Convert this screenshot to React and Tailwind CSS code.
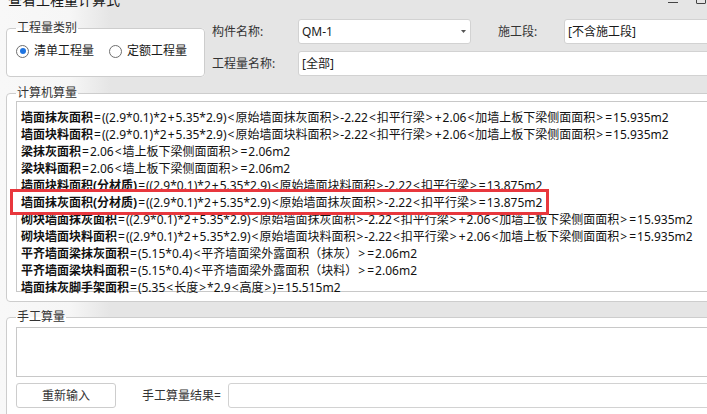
const lines = [
  ["墙面抹灰面积", "=((2.9*0.1)*2+5.35*2.9)<原始墙面抹灰面积>-2.22<扣平行梁>+2.06<加墙上板下梁侧面面积>=15.935m2"],
  ["墙面块料面积", "=((2.9*0.1)*2+5.35*2.9)<原始墙面块料面积>-2.22<扣平行梁>+2.06<加墙上板下梁侧面面积>=15.935m2"],
  ["梁抹灰面积", "=2.06<墙上板下梁侧面面积>=2.06m2"],
  ["梁块料面积", "=2.06<墙上板下梁侧面面积>=2.06m2"],
  ["墙面块料面积(分材质)", "=((2.9*0.1)*2+5.35*2.9)<原始墙面块料面积>-2.22<扣平行梁>=13.875m2"],
  ["墙面抹灰面积(分材质)", "=((2.9*0.1)*2+5.35*2.9)<原始墙面抹灰面积>-2.22<扣平行梁>=13.875m2"],
  ["砌块墙面抹灰面积", "=((2.9*0.1)*2+5.35*2.9)<原始墙面抹灰面积>-2.22<扣平行梁>+2.06<加墙上板下梁侧面面积>=15.935m2"],
  ["砌块墙面块料面积", "=((2.9*0.1)*2+5.35*2.9)<原始墙面块料面积>-2.22<扣平行梁>+2.06<加墙上板下梁侧面面积>=15.935m2"],
  ["平齐墙面梁抹灰面积", "=(5.15*0.4)<平齐墙面梁外露面积（抹灰）>=2.06m2"],
  ["平齐墙面梁块料面积", "=(5.15*0.4)<平齐墙面梁外露面积（块料）>=2.06m2"],
  ["墙面抹灰脚手架面积", "=(5.35<长度>*2.9<高度>)=15.515m2"],
];

function fmt(s) {
  return s.split(/([=<>+])/).map((p, i) =>
    /^[=<>+]$/.test(p) ? (
      <span key={i} className="px-px">
        {p}
      </span>
    ) : (
      <span key={i}>{p}</span>
    )
  );
}

function Radio({ checked, label }) {
  return (
    <div className="flex items-center">
      <div className="w-[13px] h-[13px] rounded-full border border-[#6e6e6e] bg-white flex items-center justify-center">
        {checked && <div className="w-[6px] h-[6px] rounded-full bg-[#1f74e0]" />}
      </div>
      <span className="ml-[5px] leading-[16px] text-[#1a1a1a]">{label}</span>
    </div>
  );
}

export default function App() {
  return (
    <div className="w-[707px] h-[414px] overflow-hidden bg-[linear-gradient(90deg,#f8f8f8_0px,#f6f6f6_70px,#e5e5e5_110px,#e5e5e5_100%)] font-['Noto_Sans','Noto_Sans_CJK_SC',sans-serif] text-[12px] text-[#1b1b1b]">
      <div className="w-[800px] flex flex-col">
        {/* title bar */}
        <div className="h-[10px] flex items-start overflow-hidden">
          <div className="ml-[8px] -mt-[10px] text-[14px] leading-[20px] text-[#1a1a1a] whitespace-nowrap">查看工程量计算式</div>
          <div className="ml-[548px] mt-[2px] w-[10px] h-px bg-[#444]" />
          <div className="ml-[18px] -mt-[6px] w-[10px] h-[10px] border border-[#444] rounded-[1px]" />
        </div>

        {/* top row */}
        <div className="mt-[9px] flex items-start">
          <fieldset className="ml-[6px] mt-px w-[199px] h-[57px] border border-[#cdcdcd] rounded-[4px] bg-white px-[9px]">
            <legend className="px-px leading-[16px] text-[#333]">工程量类别</legend>
            <div className="mt-[7px] flex items-center">
              <Radio checked label="清单工程量" />
              <div className="ml-[15px]">
                <Radio label="定额工程量" />
              </div>
            </div>
          </fieldset>

          <div className="ml-[7px] flex-1 flex flex-col gap-[7px]">
            <div className="flex items-center h-[25px]">
              <span className="w-[86px] text-[#333]">构件名称:</span>
              <div className="w-[173px] h-[25px] bg-white border border-[#d2d2d2] rounded-[3px] flex items-center justify-between pl-[3px] pr-[4px]">
                <span className="text-[#1a1a1a]">QM-1</span>
                <svg width="5" height="3" viewBox="0 0 5 3">
                  <polygon points="0,0 5,0 2.5,3" fill="#555" />
                </svg>
              </div>
              <span className="ml-[27px] w-[66px] text-[#333]">施工段:</span>
              <div className="flex-1 h-[25px] bg-white border border-[#d2d2d2] rounded-[3px] flex items-center pl-[3px]">
                <span className="text-[#1a1a1a]">[不含施工段]</span>
              </div>
            </div>
            <div className="flex items-center h-[25px]">
              <span className="w-[86px] text-[#333]">工程量名称:</span>
              <div className="flex-1 h-[25px] bg-white border border-[#d2d2d2] rounded-[3px] flex items-center pl-[3px]">
                <span className="text-[#1a1a1a]">[全部]</span>
              </div>
            </div>
          </div>
        </div>

        {/* computer calc */}
        <fieldset className="mt-[8px] ml-[6px] border border-[#cdcdcd] rounded-[4px] bg-white px-[9px] pb-[9px]">
          <legend className="px-px leading-[16px] text-[#333]">计算机算量</legend>
          <div className="h-[191px] border border-[#c8c8c8] bg-white pt-[7px] pl-[4px]">
            {lines.map(([label, rest], i) => (
              <div
                key={i}
                className={
                  "whitespace-nowrap leading-[17px] text-[#111] " +
                  (i === 5 ? "relative z-10" : "")
                }
              >
                {i === 5 && (
                  <div className="absolute left-[-11px] top-[-5.5px] w-[539px] h-[26px] border-[3px] border-[#e8373d] bg-white -z-10" />
                )}
                <span className="font-bold">{label}</span>
                {fmt(rest)}
              </div>
            ))}
          </div>
        </fieldset>

        {/* manual calc */}
        <fieldset className="mt-[7px] ml-[6px] border border-[#cdcdcd] rounded-[4px] bg-white px-[9px] pb-[20px]">
          <legend className="px-px leading-[16px] text-[#333]">手工算量</legend>
          <div className="mt-[2px] h-[50px] border border-[#c8c8c8] bg-white" />
          <div className="mt-[6px] flex items-center">
            <button className="w-[100px] h-[25px] border border-[#cdcdcd] rounded-[3px] bg-white text-[#333] leading-[16px]">
              重新输入
            </button>
            <span className="ml-[26px] text-[#333]">手工算量结果=</span>
            <div className="ml-[7px] flex-1 h-[25px] bg-white border border-[#d2d2d2] rounded-[3px]" />
          </div>
        </fieldset>
      </div>
    </div>
  );
}
